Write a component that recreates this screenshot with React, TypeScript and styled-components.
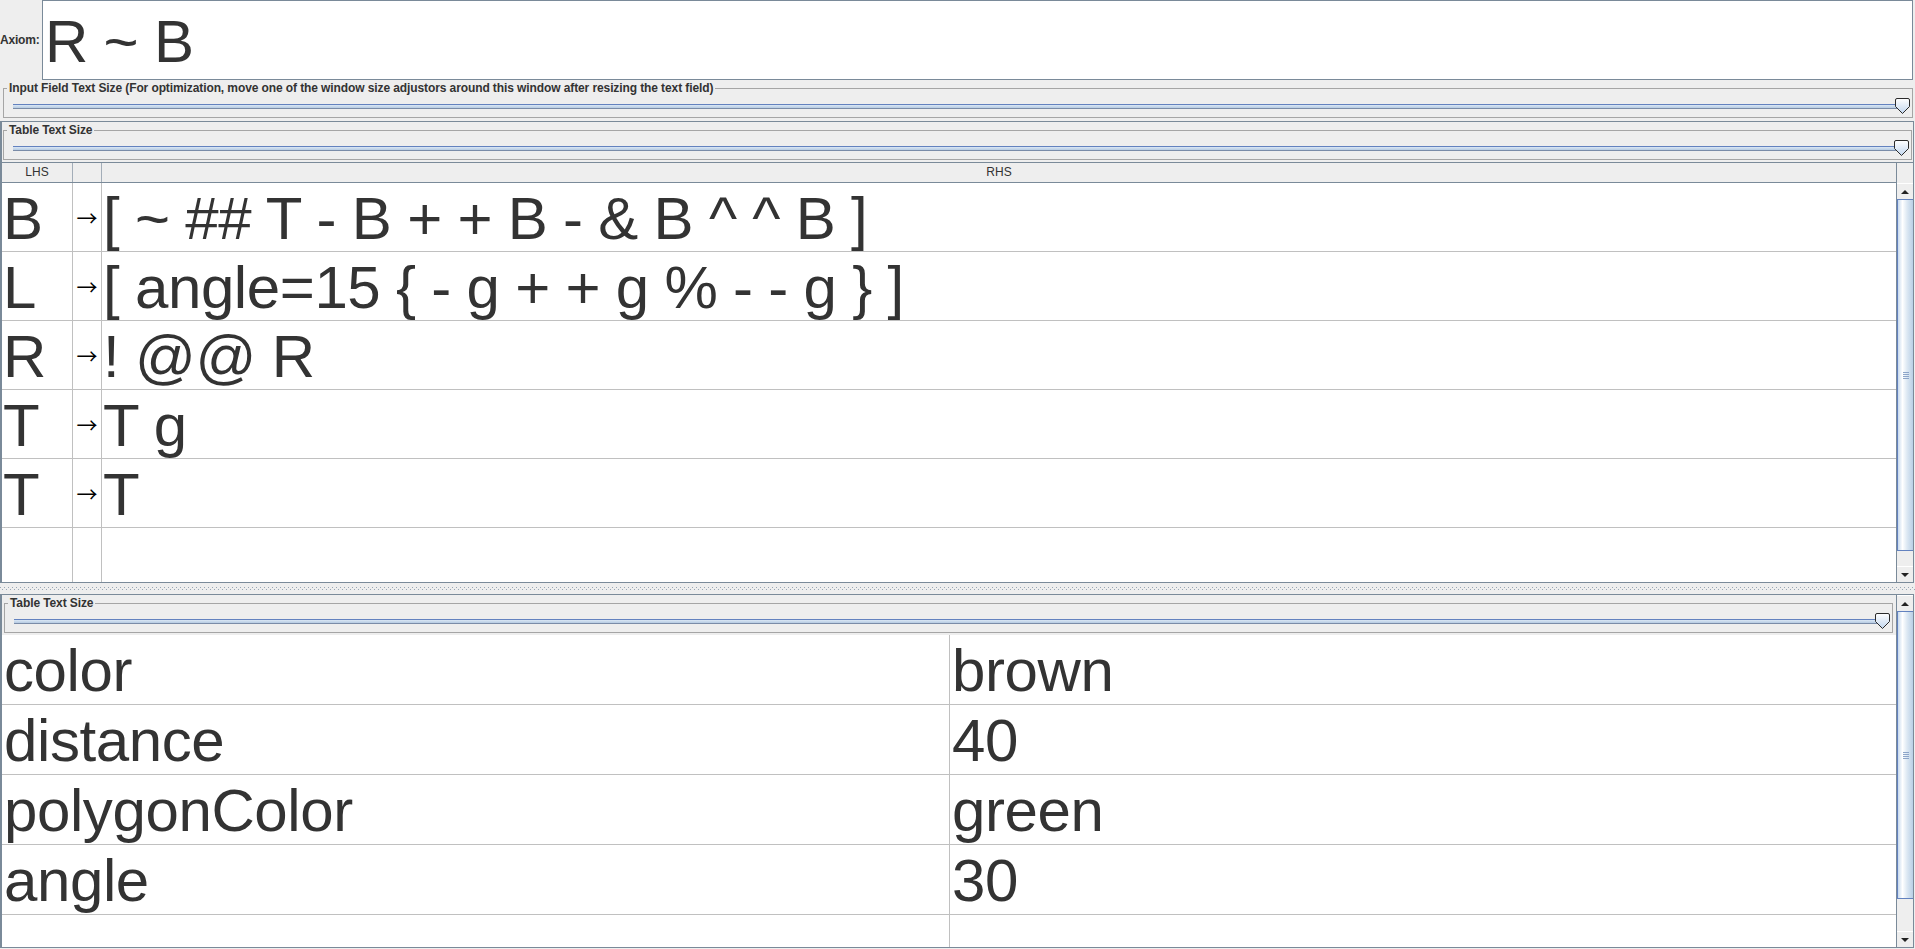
import React from "react";
import styled, { createGlobalStyle } from "styled-components";

const rules = [
  { lhs: "B", rhs: "[ ~ ## T - B + + B - & B ^ ^ B ]" },
  { lhs: "L", rhs: "[ angle=15 { - g + + g % - - g } ]" },
  { lhs: "R", rhs: "! @@ R" },
  { lhs: "T", rhs: "T g" },
  { lhs: "T", rhs: "T" },
];

const variables = [
  ["color", "brown"],
  ["distance", "40"],
  ["polygonColor", "green"],
  ["angle", "30"],
];

const GlobalStyle = createGlobalStyle`
  html, body {
    margin: 0;
    padding: 0;
    background: #eeeeee;
  }
  body {
    font-family: "Liberation Sans", Arial, sans-serif;
    color: #333333;
    overflow: hidden;
  }
`;

const Frame = styled.div`
  width: 1915px;
  height: 949px;
  display: flex;
  flex-direction: column;
  background: #eeeeee;
`;

const AxiomRow = styled.div`
  display: flex;
  align-items: center;
  height: 80px;
  padding-right: 2px;
`;

const FieldLabel = styled.label`
  width: 42px;
  font-size: 12px;
  font-weight: bold;
  letter-spacing: -0.2px;
  color: #333;
`;

const AxiomField = styled.div`
  flex: 1;
  height: 80px;
  box-sizing: border-box;
  border: 1px solid #7a8a99;
  background: #fff;
  font-size: 60px;
  line-height: 70px;
  letter-spacing: -0.4px;
  word-spacing: -0.6px;
  padding: 6px 0 0 2px;
  color: #333;
`;

const SizeBox = styled.fieldset<{ $left: number; $right: number }>`
  margin: 2px ${(p) => p.$right}px 0 ${(p) => p.$left}px;
  padding: 0 2px 0 9px;
  border: 1px solid #a5a5a5;
  min-width: 0;
`;

const BoxTitle = styled.legend`
  font-size: 12px;
  font-weight: bold;
  line-height: 13px;
  letter-spacing: -0.1px;
  color: #333;
  padding: 0 2px;
  margin-left: -6px;
`;

const SliderRow = styled.div`
  display: flex;
  align-items: center;
  height: 22px;
`;

const Track = styled.div`
  flex: 1;
  height: 5px;
  box-sizing: border-box;
  border-top: 1px solid #6382bf;
  border-bottom: 1px solid #7a8ca8;
  background: linear-gradient(#dae7f5, #b6cbe2);
`;

const ThumbSvg = styled.svg`
  display: block;
  margin-left: -8px;
  flex: none;
`;

const SliderThumb = () => (
  <ThumbSvg width="15" height="16" viewBox="0 0 15 16">
    <defs>
      <linearGradient id="thumbFill" x1="0" y1="0" x2="0" y2="1">
        <stop offset="0" stopColor="#ffffff" />
        <stop offset="1" stopColor="#c2d6ee" />
      </linearGradient>
    </defs>
    <path
      d="M2 0.5 H13 Q14.5 0.5 14.5 2 V8.5 L7.5 15.5 L0.5 8.5 V2 Q0.5 0.5 2 0.5 Z"
      fill="url(#thumbFill)"
      stroke="#2b2b2b"
      strokeWidth="1"
    />
  </ThumbSvg>
);

const TextSizeBox = ({
  title,
  left,
  right,
}: {
  title: string;
  left: number;
  right: number;
}) => (
  <SizeBox $left={left} $right={right}>
    <BoxTitle>{title}</BoxTitle>
    <SliderRow>
      <Track />
      <SliderThumb />
    </SliderRow>
  </SizeBox>
);

const Section = styled.div<{ $height: number }>`
  height: ${(p) => p.$height}px;
  box-sizing: border-box;
  display: flex;
  flex-direction: column;
  border-left: 2px solid #7a8a99;
  border-right: 1px solid #7a8a99;
  margin-right: 1px;
`;

const TopSection = styled(Section)`
  margin-top: 3px;
  border-top: 1px solid #7a8a99;
  border-bottom: 1px solid #7a8a99;
`;

const BottomSection = styled(Section)`
  border-top: 1px solid #7a8a99;
  border-bottom: 1px solid #7a8a99;
  flex-direction: row;
`;

const Divider = styled.div`
  height: 11px;
  flex: none;
  background-color: #eeeeee;
  background-image: repeating-linear-gradient(90deg, #9aa7b5 0 1px, transparent 1px 4px),
    repeating-linear-gradient(90deg, #9aa7b5 0 1px, transparent 1px 4px);
  background-size: 100% 1px;
  background-position: 0 4px, 2px 6px;
  background-repeat: no-repeat;
`;

const TableArea = styled.div`
  flex: 1;
  display: flex;
  margin-top: 2px;
  border-top: 1px solid #7a8a99;
  min-height: 0;
`;

const TableMain = styled.div`
  flex: 1;
  display: flex;
  flex-direction: column;
  background: #fff;
`;

const HeaderRow = styled.div`
  display: grid;
  grid-template-columns: 71px 29px 1fr;
  height: 19px;
  background: #eeeeee;
  border-bottom: 1px solid #7a8a99;
`;

const HeaderCell = styled.div`
  border-right: 1px solid #a3adb8;
  font-size: 12px;
  line-height: 19px;
  text-align: center;
  color: #333;
  &:last-child {
    border-right: none;
  }
`;

const RuleRow = styled.div<{ $filler?: boolean }>`
  display: grid;
  grid-template-columns: 71px 29px 1fr;
  height: ${(p) => (p.$filler ? "auto" : "68px")};
  flex: ${(p) => (p.$filler ? 1 : "none")};
  border-bottom: ${(p) => (p.$filler ? "none" : "1px solid #c0c0c0")};
`;

const BigCell = styled.div`
  border-right: 1px solid #c0c0c0;
  font-size: 60px;
  line-height: 64px;
  letter-spacing: -0.4px;
  word-spacing: -0.6px;
  padding: 4px 0 0 1px;
  white-space: nowrap;
  overflow: hidden;
  color: #333;
  &:last-child {
    border-right: none;
  }
`;

const ArrowCell = styled.div`
  border-right: 1px solid #c0c0c0;
  display: flex;
  align-items: center;
  justify-content: center;
  font-family: "Noto Sans CJK JP", "DejaVu Sans", sans-serif;
  font-size: 21px;
  line-height: 21px;
  color: #000;
`;

const ScrollCol = styled.div`
  width: 16px;
  flex: none;
  display: flex;
  flex-direction: column;
  border-left: 1px solid #7a8a99;
  background: #eeeeee;
`;

const HeaderCorner = styled.div`
  height: 20px;
  flex: none;
  background: #eeeeee;
`;

const ScrollButton = styled.div`
  height: 16px;
  flex: none;
  display: flex;
  align-items: center;
  justify-content: center;
  background: #eeeeee;
  border-top: 1px solid #ffffff;
  box-sizing: border-box;
`;

const ScrollThumb = styled.div`
  flex: 1;
  display: flex;
  align-items: center;
  justify-content: center;
  box-sizing: border-box;
  border: 1px solid #6382bf;
  border-right: none;
  background: linear-gradient(90deg, #c8daee 0%, #ffffff 30%, #dde8f3 60%, #b8cfe5 100%);
`;

const Grip = styled.div`
  width: 6px;
  height: 7px;
  background: repeating-linear-gradient(180deg, #8da5c9 0 1px, transparent 1px 2px);
`;

const ScrollTrack = styled.div<{ $height: number }>`
  height: ${(p) => p.$height}px;
  flex: none;
  background: #eeeeee;
`;

const Triangle = styled.div<{ $down?: boolean }>`
  width: 0;
  height: 0;
  border-left: 4px solid transparent;
  border-right: 4px solid transparent;
  ${(p) =>
    p.$down ? "border-top: 4px solid #222;" : "border-bottom: 4px solid #222;"}
`;

const ScrollBar = ({ rest }: { rest: number }) => (
  <>
    <ScrollButton>
      <Triangle />
    </ScrollButton>
    <ScrollThumb>
      <Grip />
    </ScrollThumb>
    <ScrollTrack $height={rest} />
    <ScrollButton>
      <Triangle $down />
    </ScrollButton>
  </>
);

const BottomContent = styled.div`
  flex: 1;
  display: flex;
  flex-direction: column;
  min-width: 0;
`;

const VarTable = styled.div`
  flex: 1;
  display: flex;
  flex-direction: column;
  margin-top: 2px;
  background: #fff;
`;

const VarRow = styled.div<{ $filler?: boolean }>`
  display: grid;
  grid-template-columns: 948px 1fr;
  height: ${(p) => (p.$filler ? "auto" : "69px")};
  flex: ${(p) => (p.$filler ? 1 : "none")};
  border-bottom: ${(p) => (p.$filler ? "none" : "1px solid #c0c0c0")};
`;

const VarCell = styled(BigCell)`
  padding-left: 2px;
`;

const LSystemEditor = () => {
  return (
    <Frame>
      <GlobalStyle />
      <AxiomRow>
        <FieldLabel>Axiom:</FieldLabel>
        <AxiomField>R ~ B</AxiomField>
      </AxiomRow>
      <TextSizeBox
        title="Input Field Text Size (For optimization, move one of the window size adjustors around this window after resizing the text field)"
        left={3}
        right={2}
      />
      <TopSection $height={462}>
        <TextSizeBox title="Table Text Size" left={1} right={1} />
        <TableArea>
          <TableMain>
            <HeaderRow>
              <HeaderCell>LHS</HeaderCell>
              <HeaderCell />
              <HeaderCell>RHS</HeaderCell>
            </HeaderRow>
            {rules.map((r, i) => (
              <RuleRow key={i}>
                <BigCell>{r.lhs}</BigCell>
                <ArrowCell>→</ArrowCell>
                <BigCell>{r.rhs}</BigCell>
              </RuleRow>
            ))}
            <RuleRow $filler>
              <BigCell />
              <ArrowCell />
              <BigCell />
            </RuleRow>
          </TableMain>
          <ScrollCol>
            <HeaderCorner />
            <ScrollBar rest={15} />
          </ScrollCol>
        </TableArea>
      </TopSection>
      <Divider />
      <BottomSection $height={354}>
        <BottomContent>
          <TextSizeBox title="Table Text Size" left={2} right={3} />
          <VarTable>
            {variables.map(([name, value], i) => (
              <VarRow key={i}>
                <VarCell>{name}</VarCell>
                <VarCell>{value}</VarCell>
              </VarRow>
            ))}
            <VarRow $filler>
              <VarCell />
              <VarCell />
            </VarRow>
          </VarTable>
        </BottomContent>
        <ScrollCol>
          <ScrollBar rest={32} />
        </ScrollCol>
      </BottomSection>
    </Frame>
  );
};

export default LSystemEditor;
